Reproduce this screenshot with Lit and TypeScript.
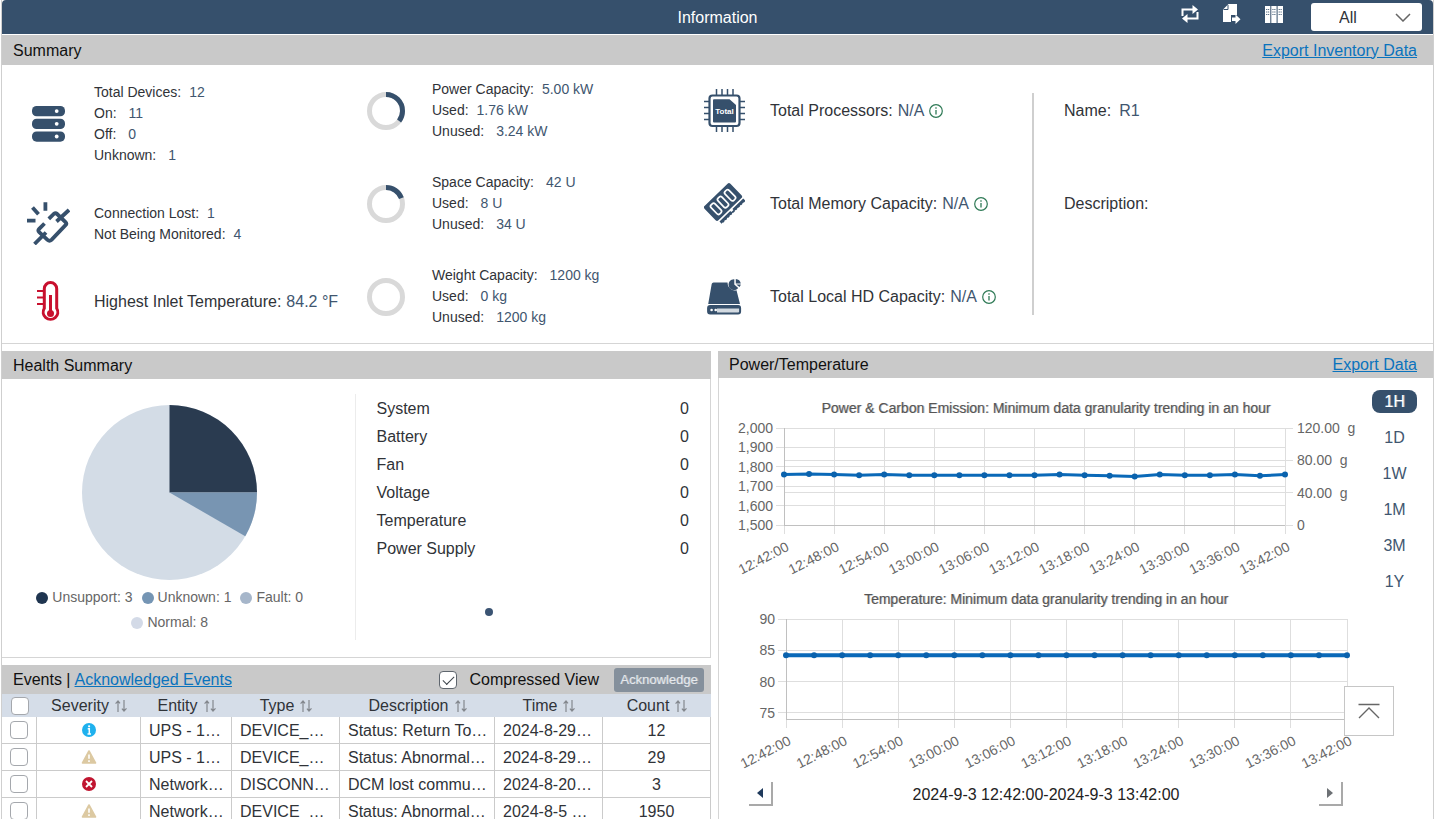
import { LitElement, html, svg, css } from "lit";
import { customElement, property, state } from "lit/decorators.js";

interface Stat { label: string; value: string; wide?: boolean }
interface EventRow { severity: "info" | "warn" | "error"; entity: string; type: string; description: string; time: string; count: number }

const NAVY = "#36506c";

const deviceStats: Stat[] = [
  { label: "Total Devices:", value: "12" },
  { label: "On:", value: "11", wide: true },
  { label: "Off:", value: "0", wide: true },
  { label: "Unknown:", value: "1", wide: true },
];
const linkStats: Stat[] = [
  { label: "Connection Lost:", value: "1" },
  { label: "Not Being Monitored:", value: "4" },
];
const capacities: { share: number; rows: Stat[] }[] = [
  { share: 0.352, rows: [
    { label: "Power Capacity:", value: "5.00 kW" },
    { label: "Used:", value: "1.76 kW" },
    { label: "Unused:", value: "3.24 kW", wide: true } ] },
  { share: 0.19, rows: [
    { label: "Space Capacity:", value: "42 U", wide: true },
    { label: "Used:", value: "8 U", wide: true },
    { label: "Unused:", value: "34 U", wide: true } ] },
  { share: 0, rows: [
    { label: "Weight Capacity:", value: "1200 kg", wide: true },
    { label: "Used:", value: "0 kg", wide: true },
    { label: "Unused:", value: "1200 kg", wide: true } ] },
];
const healthItems = ["System", "Battery", "Fan", "Voltage", "Temperature", "Power Supply"];
const legend = [
  { label: "Unsupport: 3", tone: "t1" },
  { label: "Unknown: 1", tone: "t2" },
  { label: "Fault: 0", tone: "t3" },
  { label: "Normal: 8", tone: "t4" },
];
const events: EventRow[] = [
  { severity: "info", entity: "UPS - 1…", type: "DEVICE_…", description: "Status: Return To…", time: "2024-8-29…", count: 12 },
  { severity: "warn", entity: "UPS - 1…", type: "DEVICE_…", description: "Status: Abnormal…", time: "2024-8-29…", count: 29 },
  { severity: "error", entity: "Network…", type: "DISCONN…", description: "DCM lost commu…", time: "2024-8-20…", count: 3 },
  { severity: "warn", entity: "Network…", type: "DEVICE_…", description: "Status: Abnormal…", time: "2024-8-5 …", count: 1950 },
];
const columns = ["Severity", "Entity", "Type", "Description", "Time", "Count"];
const times = ["12:42:00", "12:48:00", "12:54:00", "13:00:00", "13:06:00", "13:12:00", "13:18:00", "13:24:00", "13:30:00", "13:36:00", "13:42:00"];
const power = [1760, 1763, 1760, 1756, 1760, 1757, 1756, 1757, 1756, 1756, 1757, 1760, 1757, 1754, 1750, 1760, 1757, 1757, 1760, 1754, 1760];
const temperature = power.map(() => 84.2);

/* ---- icons ---- */
const iconRepeat = html`<svg width="18" height="18" viewBox="0 0 18 18" aria-hidden="true"><g fill="none" stroke="#fff" stroke-width="2"><path d="M1.500 11V4.500H12"/><path d="M16.500 7V13.500H6"/></g><path d="M11.500 0l5.500 4.500-5.500 4.500z M6.500 9l-5.500 4.500 5.500 4.500z" fill="#fff"/></svg>`;
const iconExportDoc = html`<svg width="18" height="21" viewBox="0 0 18 21" aria-hidden="true"><path d="M5.500 0H14V11H8V18H0V5.500z" fill="#fff"/><path d="M5 1v4.500H0.500" fill="none" stroke="${NAVY}" stroke-width="1"/><path d="M9 13.500h3.500v-3l5 4.700-5 4.700v-3H9z" fill="#fff"/></svg>`;
const iconRacks = html`<svg width="18" height="17" viewBox="0 0 18 17" aria-hidden="true"><path d="M0 0h5.300v17H0z M6.300 0h5.300v17H6.300z M12.600 0H18v17h-5.400z" fill="#fff"/><path d="M1 3.500h3.300M1 6h3.300M1 8.500h3.300M7.300 3.500h3.300M7.300 6h3.300M7.300 8.500h3.300M13.600 3.500H17M13.600 6H17M13.600 8.500H17" stroke="${NAVY}" stroke-width=".8" stroke-dasharray="1.300 .6"/></svg>`;
const iconServers = html`<svg width="33" height="36" viewBox="0 0 33 36" aria-hidden="true">${[0, 12.7, 25.4].map(y => svg`<rect x="0" y=${y} width="33" height="10.300" rx="4.600" fill=${NAVY}/><circle cx="24.700" cy=${y + 5.1} r="1.900" fill="#fff"/>`)}</svg>`;
const iconBroken = html`<svg width="43" height="43" viewBox="0 0 43 43" aria-hidden="true"><g fill="none" stroke="${NAVY}" stroke-width="3.800"><path d="M0 18.600h8.500M5.500 5.500l6 6.800M18.400.3v8.500"/><path d="M21.800 16.800l5-4.800q1.700-1.500 3.300 0l8.400 8q1.600 1.600 0 3.200L24.500 37.800q-2 1.800-4 0l-8.300-7.600q-1.600-1.600 0-3.400l5.300-5.300"/><path d="M42 8L29.500 19.500M7.500 42l11.500-11.500"/></g></svg>`;
const iconThermo = html`<svg width="24" height="41" viewBox="0 0 24 41" aria-hidden="true"><g fill="none" stroke="#c8102e"><path stroke-width="3" d="M8.300 7.800a6.200 6.200 0 0 1 12.400 0V27.200a7.300 7.300 0 1 1-12.400 0z"/><path stroke-width="2.200" d="M1 10h7M1 16.500h7M1 23h7"/><path stroke-width="3" d="M14.500 14v18"/></g><circle cx="14.500" cy="32.500" r="3.500" fill="#c8102e"/></svg>`;
const iconCpu = html`<svg width="41" height="43" viewBox="0 0 41 43" aria-hidden="true"><g fill="none" stroke="${NAVY}"><rect x="5.500" y="6.500" width="30" height="30.500" rx="3" stroke-width="2.200"/><path stroke-width="1.500" d="M12.500 0v6M18 0v6M23.500 0v6M29 0v6M12.500 37v6M18 37v6M23.500 37v6M29 37v6M0 12.500h5M0 18.500h5M0 24.500h5M0 30.500h5M36 12.500h5M36 18.500h5M36 24.500h5M36 30.500h5"/></g><path d="M10 10.300H25.500L32 16V32.500q0 1-1 1H10q-1 0-1-1V11.300q0-1 1-1z" fill="${NAVY}"/><text x="20.500" y="25" text-anchor="middle" font-size="8" font-weight="700" fill="#fff">Total</text></svg>`;
const iconMemory = html`<svg width="41" height="41" viewBox="0 0 41 41" aria-hidden="true"><g transform="translate(19 19) rotate(-44)"><rect x="-18" y="-10" width="36" height="20" rx="2" fill="${NAVY}"/><path d="M-16 11.500H-1v1.500h3v-1.500H17v3.500H-16z" fill="${NAVY}"/><path d="M-16 15.500H17" stroke="#fff" stroke-width="2" stroke-dasharray="1.600 2"/><g fill="none" stroke="#fff" stroke-width="1.700"><rect x="-12.500" y="-6.200" width="5.500" height="12.500" rx="2"/><rect x="-2.800" y="-6.200" width="5.500" height="12.500" rx="2"/><rect x="7" y="-6.200" width="5.500" height="12.500" rx="2"/></g></g></svg>`;
const iconDisk = html`<svg width="35" height="36" viewBox="0 0 35 36" aria-hidden="true"><path d="M6.500 3.500H20.500a7.500 7.500 0 0 0 9 7.800L33 25H1.200L4.700 5q.3-1.500 1.800-1.500z" fill="${NAVY}"/><rect x="1.100" y="27.100" width="32" height="7.300" rx="2" fill="#d3dae1" stroke="${NAVY}" stroke-width="2"/><path d="M2 27.500H10V34H2z M2 27.500h31v2H2z" fill="${NAVY}"/><circle cx="4.600" cy="31" r="1.300" fill="#fff"/><circle cx="8.700" cy="31" r="1.300" fill="#fff"/><path d="M27.300 .3V5.400L31.200 9A5.400 5.400 0 1 1 27.300 .3z" fill="${NAVY}"/><path d="M28.800 0a5.500 5.500 0 0 1 5 4.500h-5z M29.300 5.600h4.500q-.2 1.300-1.300 2.500z" fill="${NAVY}"/></svg>`;
const iconInfo = html`<svg width="14" height="14" viewBox="0 0 14 14" aria-hidden="true"><circle cx="7" cy="7" r="6.300" fill="none" stroke="#2f7a56" stroke-width="1.200"/><path d="M7 6v4.500M7 3.200v1.500" stroke="#2f7a56" stroke-width="1.300"/></svg>`;
const iconSort = html`<svg class="sort" width="12" height="12" viewBox="0 0 12 12" aria-hidden="true"><path d="M3 12V1M.6 3.600L3 1l2 2.300M9 0v11M6.900 8.700L9 11l2.500-2.600" fill="none" stroke="#84888e" stroke-width="1.200"/></svg>`;
const severityIcon = {
  info: html`<svg width="14" height="14" viewBox="0 0 14 14" role="img" aria-label="Info"><circle cx="7" cy="7" r="7" fill="#1fb1ee"/><path d="M5.700 5.800H7.300V11M5.500 11h3.500" stroke="#fff" stroke-width="1.500" fill="none"/><circle cx="7.100" cy="3.300" r="1.100" fill="#fff"/></svg>`,
  warn: html`<svg width="16" height="14" viewBox="0 0 16 14" role="img" aria-label="Warning"><path d="M8 1l6.500 12h-13z" fill="#dcc9a2" stroke="#dcc9a2" stroke-width="1.600" stroke-linejoin="round"/><path d="M8 4.500v4.300M8 10.300v1.700" stroke="#fff" stroke-width="1.600"/></svg>`,
  error: html`<svg width="14" height="14" viewBox="0 0 14 14" role="img" aria-label="Error"><circle cx="7" cy="7" r="7" fill="#c01530"/><path d="M4 4l6 6M10 4l-6 6" stroke="#fff" stroke-width="1.800"/></svg>`,
};

/* ---- line chart ---- */
@customElement("trend-chart")
class TrendChart extends LitElement {
  @property() heading = "";
  @property({ attribute: false }) values: number[] = [];
  @property({ attribute: false }) leftTicks: number[] = [];
  @property({ attribute: false }) rightTicks: { at: number; label: string }[] = [];
  @property({ type: Number }) min = 0;
  @property({ type: Number }) max = 1;
  @property({ type: Number }) height = 210;
  @property({ type: Number }) top = 50;
  @property({ type: Number }) bottom = 147;
  @property({ type: Number }) left = 65;
  @property({ type: Number }) right = 566;
  @property({ type: Number }) weight = 3;

  static styles = css`
    :host { display: block; }
    svg { display: block; width: 100%; height: auto; overflow: visible; }
    text { font: 14px "Liberation Sans", Arial, sans-serif; fill: #666; white-space: pre; }
    .heading { fill: #555; text-shadow: 1px 0 rgba(85, 85, 85, 0.4); }
    .grid { stroke: #dedede; shape-rendering: crispEdges; }
    .axis { stroke: #c0c0c0; shape-rendering: crispEdges; }
    .series { fill: none; stroke: #0a69b8; }
    .mark { fill: #0a62ad; }
  `;

  render() {
    const y = (v: number) => this.bottom - ((v - this.min) / (this.max - this.min)) * (this.bottom - this.top);
    const x = (i: number, n: number) => this.left + (i / (n - 1)) * (this.right - this.left);
    const pts = this.values.map((v, i) => [x(i, this.values.length), y(v)]);
    return html`<svg viewBox="0 0 634 ${this.height}" role="img" aria-label=${this.heading}>
      <text class="heading" x="327" y=${this.top - 15} text-anchor="middle">${this.heading}</text>
      ${this.leftTicks.map(t => svg`
        <line class="grid" x1=${this.left - 8} x2=${this.right} y1=${y(t)} y2=${y(t)}/>
        <text x=${this.left - 11} y=${y(t) + 5} text-anchor="end">${t.toLocaleString("en-US")}</text>`)}
      ${this.rightTicks.map(t => svg`
        <line class="grid" x1=${this.left} x2=${this.right + 8} y1=${y(t.at)} y2=${y(t.at)}/>
        <text x=${this.right + 12} y=${y(t.at) + 5}>${t.label}</text>`)}
      ${times.map((t, i) => {
        const tx = x(i, times.length);
        return svg`
        <line class="grid" x1=${tx} x2=${tx} y1=${this.top} y2=${this.bottom + 9}/>
        <text transform="translate(${tx + 6} ${this.bottom + 25}) rotate(-27)" text-anchor="end">${t}</text>`;
      })}
      <line class="axis" x1=${this.left} x2=${this.left} y1=${this.top} y2=${this.bottom}/>
      <line class="axis" x1=${this.left} x2=${this.right} y1=${this.bottom} y2=${this.bottom}/>
      <polyline class="series" stroke-width=${this.weight} points=${pts.map(p => p.join(",")).join(" ")}/>
      ${pts.map(p => svg`<circle class="mark" cx=${p[0]} cy=${p[1]} r="3"/>`)}
    </svg>`;
  }
}

@customElement("app-root")
class AppRoot extends LitElement {
  @state() range = "1H";

  static styles = css`
    :host { display: flex; flex-direction: column; height: 100vh; box-sizing: border-box; overflow: hidden; position: relative;
      margin: 0 1px; border: 1px solid #cfcfcf; border-width: 0 1px; background: #fff; color: #303338;
      font: 16px/21px "Liberation Sans", Arial, sans-serif; }
    * { box-sizing: border-box; }
    svg { display: block; flex: none; }
    a { color: #0a73bd; text-decoration: underline; }
    button, select, input { font: inherit; margin: 0; }
    h1, h2 { font: inherit; margin: 0; }
    ul { list-style: none; margin: 0; padding: 0; }

    .titlebar { display: grid; grid-template-columns: 1fr auto 1fr; align-items: center; height: 34px; margin-bottom: 1px; flex: none;
      background: #36506c; color: #fff; border-radius: 4px 4px 0 0; }
    .titlebar h1 { grid-column: 2; }
    .tools { display: flex; align-items: center; justify-content: flex-end; gap: 24px; padding-right: 11px; }
    .tool { display: grid; place-items: center; height: 28px; width: 18px; padding: 0 0 6px; border: 0; background: none; }
    .picker { display: grid; align-items: center; width: 111px; margin-left: 4px; }
    .picker > * { grid-area: 1 / 1; }
    .picker select { appearance: none; height: 28px; width: 100%; border: 0; border-radius: 3px; background: #fff; color: #303338; padding: 0 28px; }
    .picker svg { justify-self: end; margin-right: 11px; pointer-events: none; }

    .bar { display: flex; align-items: center; gap: 4px; background: #c9c9c9; color: #111; padding: 0 16px 0 11px; flex: none; height: 28px; }
    .bar.tall { height: 30px; }
    .push { margin-left: auto; }

    .summary { display: grid; grid-template-columns: 338fr 338fr 354fr 401fr; flex: none; border-bottom: 1px solid #d5d5d5; }
    .column { display: flex; flex-direction: column; gap: 30px; padding: 14px 0 15px; }
    .column.first { gap: 36px; padding-top: 17px; }
    .stat { display: grid; grid-template-columns: 92px 1fr; align-items: center; }
    .stat > :first-child { justify-self: center; }
    .stat.row { min-height: 63px; }
    .small { font-size: 14px; white-space: nowrap; }
    .value { color: #41566f; margin-left: 8px; }
    .value.wide { margin-left: 12px; }
    .large { display: flex; align-items: center; gap: 5px; white-space: nowrap; }
    .large .value { margin-left: 0; }
    .about { display: flex; flex-direction: column; gap: 72px; margin: 28px 0; padding: 7px 0 0 30px; border-left: 2px solid #cfcfcf; }

    .panels { display: grid; grid-template-columns: minmax(0, 709fr) minmax(0, 715fr); gap: 7px; margin-top: 7px; flex: 1; min-height: 0; }
    .side { display: flex; flex-direction: column; gap: 7px; min-width: 0; }
    .health { display: grid; grid-template-columns: 354fr 355fr; height: 279px; border: 1px solid #d5d5d5; border-width: 0 1px 1px 0; }
    .pie { margin: 15px 0 17px; padding: 11px 17px 0 0; border-right: 1px solid #ececec; display: flex; flex-direction: column; align-items: center; }
    .legend { display: flex; flex-wrap: wrap; justify-content: center; column-gap: 9px; width: 280px; margin-top: 5px; font-size: 14px; line-height: 25px; color: #666; }
    .legend li { display: flex; align-items: center; gap: 4px; }
    .legend li::before { content: ""; width: 12px; height: 12px; border-radius: 50%; background: currentColor; }
    .legend .t1::before { background: #1f3550; }
    .legend .t2::before { background: #7595b4; }
    .legend .t3::before { background: #a6b6ca; }
    .legend .t4::before { background: #d3dae7; }
    .metrics { padding: 16px 21px 0; }
    .metrics li { display: flex; justify-content: space-between; line-height: 28px; }
    .page { display: block; width: 8px; height: 8px; padding: 0; border: 0; border-radius: 50%; background: #3b5473; margin: 45px 0 0 129px; }

    .events .bar { height: 29px; padding-right: 7px; }
    .check { display: flex; align-items: center; gap: 12px; }
    .tick { display: block; appearance: none; width: 18px; height: 18px; border: 1px solid #a5a8ad; border-radius: 4px; background: #fff; }
    .check .tick { border-color: #5f666e; display: grid; place-items: center; }
    .check .tick:checked::before { content: ""; width: 10px; height: 5px; border: solid #3c434b; border-width: 0 0 1px 1px; transform: translateY(-1px) rotate(-45deg); }
    .ack { height: 24px; width: 90px; padding: 0; border: 0; border-radius: 3px; background: #85909c; color: #e6e9ed; font-size: 13px; margin-left: 11px; text-shadow: 1px 0 rgba(230, 233, 237, 0.4); }
    table { width: 100%; table-layout: fixed; border-collapse: separate; border-spacing: 0; }
    th { background: #d5dde8; height: 23px; padding: 0; font-weight: 400; white-space: nowrap; }
    .head { display: flex; align-items: center; justify-content: center; gap: 6px; }
    td { height: 27px; padding: 0 4px 0 8px; border: 1px solid #cbcbcb; border-width: 0 1px 1px 0; white-space: nowrap; overflow: hidden; }
    .w0 { width: 35px; } .w1 { width: 104px; } .w2 { width: 91px; } .w3 { width: 108px; } .w4 { width: 155px; } .w5 { width: 108px; } .w6 { width: 108px; }
    td.mid { padding: 0; text-align: center; }
    td.mid svg { margin: 0 auto; }
    td.mid .tick, th .tick { margin: 0 auto; }

    .trends { display: flex; flex-direction: column; border: 1px solid #d5d5d5; border-width: 0 0 0 1px; min-width: 0; }
    .trends .bar { height: 27px; margin-left: -1px; }
    .trend-body { display: flex; }
    .charts { flex: 1; min-width: 0; }
    .ranges { display: flex; flex-direction: column; align-items: center; gap: 13px; width: 80px; padding: 12px 0 0 3px; flex: none; }
    .range { width: 45px; height: 23px; padding: 0; border: 0; border-radius: 8px; background: none; color: #41566f; }
    .range.on { background: #36506c; color: #fff; text-shadow: 1px 0 rgba(255, 255, 255, 0.5); }
    .pager { display: flex; align-items: center; justify-content: space-between; padding: 0 10px 0 30px; margin-top: 12px; color: #222; }
    .step { display: grid; place-items: center; width: 24px; height: 24px; padding: 0; border: solid #a9a9a9; border-width: 0 2px 2px 0; background: #fff; }
    .totop { position: absolute; right: 39px; bottom: 83px; width: 50px; height: 50px; padding: 0; display: grid; place-items: center; background: #fff; border: 1px solid #c6c6c6; }
  `;

  private lines(rows: Stat[]) {
    return html`<div class="small">${rows.map(r => html`<div>${r.label}<span class="value ${r.wide ? "wide" : ""}">${r.value}</span></div>`)}</div>`;
  }

  private ring(share: number) {
    const c = 2 * Math.PI * 16.5;
    return html`<svg width="38" height="38" viewBox="0 0 38 38" aria-hidden="true"><g fill="none" stroke-width="5" transform="rotate(-90 19 19)"><circle cx="19" cy="19" r="16.500" stroke="#d9d9d9"/><circle cx="19" cy="19" r="16.500" stroke=${NAVY} stroke-dasharray="${c * share} ${c}"/></g></svg>`;
  }

  private total(icon: unknown, label: string) {
    return html`<div class="stat row">${icon}<div class="large"><span>${label}</span><span class="value">N/A</span>${iconInfo}</div></div>`;
  }

  render() {
    return html`
      <header class="titlebar">
        <h1>Information</h1>
        <div class="tools">
          <button class="tool" aria-label="Refresh">${iconRepeat}</button>
          <button class="tool" aria-label="Export">${iconExportDoc}</button>
          <button class="tool" aria-label="Racks">${iconRacks}</button>
          <div class="picker">
            <select aria-label="Filter"><option>All</option></select>
            <svg width="16" height="9" viewBox="0 0 16 9" aria-hidden="true"><path d="M1 1l7 7 7-7" fill="none" stroke="#666" stroke-width="1.500"/></svg>
          </div>
        </div>
      </header>

      <div class="bar tall"><h2>Summary</h2><a class="push" href="#inventory">Export Inventory Data</a></div>
      <section class="summary">
        <div class="column first">
          <div class="stat">${iconServers}${this.lines(deviceStats)}</div>
          <div class="stat">${iconBroken}${this.lines(linkStats)}</div>
          <div class="stat">${iconThermo}<div class="large"><span>Highest Inlet Temperature:</span><span class="value">84.2 °F</span></div></div>
        </div>
        <div class="column">${capacities.map(c => html`<div class="stat">${this.ring(c.share)}${this.lines(c.rows)}</div>`)}</div>
        <div class="column">
          ${this.total(iconCpu, "Total Processors:")}
          ${this.total(iconMemory, "Total Memory Capacity:")}
          ${this.total(iconDisk, "Total Local HD Capacity:")}
        </div>
        <div class="about">
          <div>Name:<span class="value">R1</span></div>
          <div>Description:</div>
        </div>
      </section>

      <main class="panels">
        <div class="side">
          <section>
            <div class="bar"><h2>Health Summary</h2></div>
            <div class="health">
              <div class="pie">
                <svg width="175" height="175" viewBox="-87.500 -87.500 175 175" role="img" aria-label="Device health">
                  <circle r="87.500" fill="#d3dce6"/>
                  <path d="M0 0V-87.500A87.500 87.500 0 0 1 87.500 0z" fill="#2a3b50"/>
                  <path d="M0 0H87.500A87.500 87.500 0 0 1 75.780 43.750z" fill="#7895b2"/>
                </svg>
                <ul class="legend">${legend.map(l => html`<li class=${l.tone}>${l.label}</li>`)}</ul>
              </div>
              <div>
                <ul class="metrics">${healthItems.map(h => html`<li><span>${h}</span><span>0</span></li>`)}</ul>
                <button class="page" aria-label="Page 1"></button>
              </div>
            </div>
          </section>

          <section class="events">
            <div class="bar">
              <h2>Events |</h2><a href="#acknowledged">Acknowledged Events</a>
              <label class="check push"><input class="tick" type="checkbox" checked />Compressed View</label>
              <button class="ack">Acknowledge</button>
            </div>
            <table>
              <thead><tr>
                <th class="w0"><input class="tick" type="checkbox" aria-label="Select all" /></th>
                ${columns.map((c, i) => html`<th class="w${i + 1}"><span class="head">${c}${iconSort}</span></th>`)}
              </tr></thead>
              <tbody>${events.map((e, i) => html`<tr>
                <td class="mid"><input class="tick" type="checkbox" aria-label="Select event ${i + 1}" /></td>
                <td class="mid">${severityIcon[e.severity]}</td>
                <td>${e.entity}</td><td>${e.type}</td><td>${e.description}</td><td>${e.time}</td>
                <td class="mid">${e.count}</td>
              </tr>`)}</tbody>
            </table>
          </section>
        </div>

        <section class="trends">
          <div class="bar"><h2>Power/Temperature</h2><a class="push" href="#export">Export Data</a></div>
          <div class="trend-body">
            <div class="charts">
              <trend-chart heading="Power &amp; Carbon Emission: Minimum data granularity trending in an hour"
                .values=${power} .leftTicks=${[2000, 1900, 1800, 1700, 1600, 1500]} min="1500" max="2000"
                .rightTicks=${[{ at: 2000, label: "120.00  g" }, { at: 1833.3, label: "80.00  g" }, { at: 1666.7, label: "40.00  g" }, { at: 1500, label: "0" }]}></trend-chart>
              <trend-chart heading="Temperature: Minimum data granularity trending in an hour"
                .values=${temperature} .leftTicks=${[90, 85, 80, 75]} min="74" max="90"
                height="182" top="31" bottom="131" left="67" right="628" weight="4"></trend-chart>
              <div class="pager">
                <button class="step" aria-label="Previous"><svg width="6" height="10" viewBox="0 0 6 10"><path d="M6 0v10L0 5z" fill="#1f3a5c"/></svg></button>
                <span>2024-9-3 12:42:00-2024-9-3 13:42:00</span>
                <button class="step" aria-label="Next"><svg width="6" height="10" viewBox="0 0 6 10"><path d="M0 0v10l6-5z" fill="#6d7175"/></svg></button>
              </div>
            </div>
            <div class="ranges">${["1H", "1D", "1W", "1M", "3M", "1Y"].map(r => html`
              <button class="range ${r === this.range ? "on" : ""}" @click=${() => (this.range = r)}>${r}</button>`)}</div>
          </div>
        </section>
      </main>
      <button class="totop" aria-label="Back to top"><svg width="22" height="16" viewBox="0 0 22 16"><path d="M.5 1.500h21M1 15L11 5l10 10" fill="none" stroke="#666" stroke-width="1.400"/></svg></button>
    `;
  }
}
